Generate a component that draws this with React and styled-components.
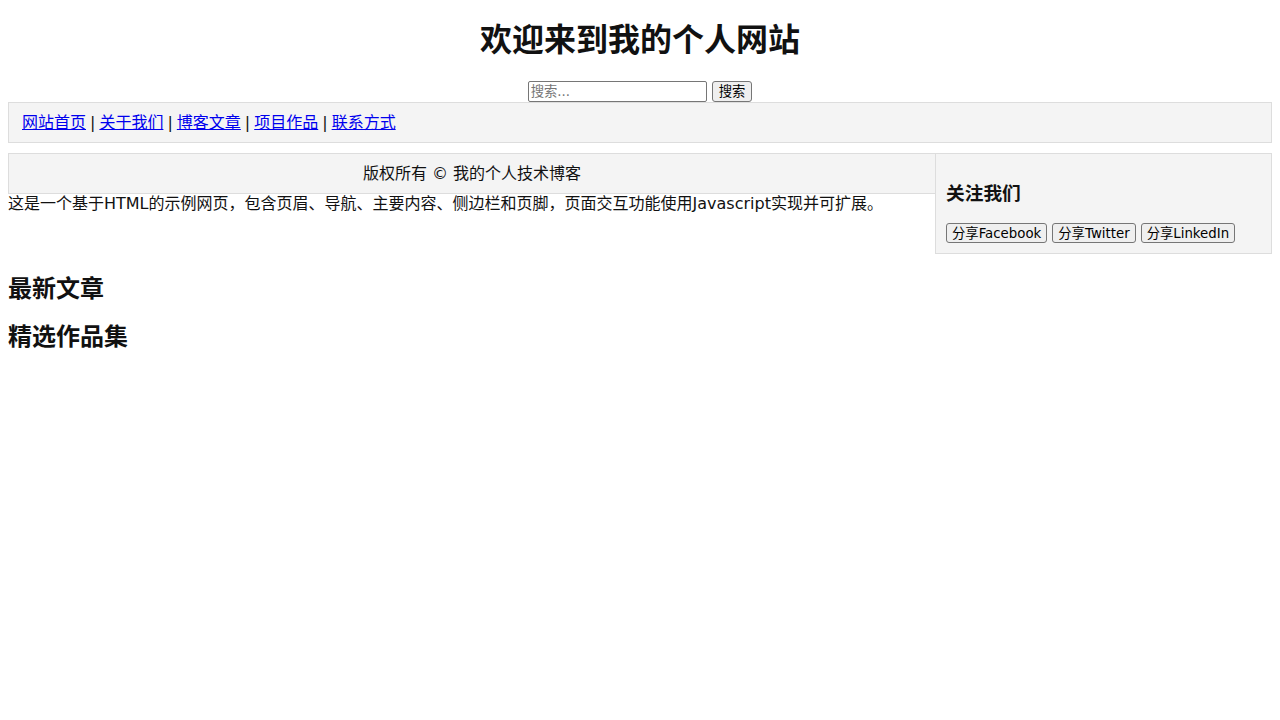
import React from "react";
import styled, { createGlobalStyle } from "styled-components";

const GlobalStyle = createGlobalStyle`
  html, body {
    margin: 0;
    padding: 0;
    background: #ffffff;
  }
  body {
    font-family: "DejaVu Sans", "Noto Sans CJK SC", sans-serif;
    font-size: 16px;
    color: #111111;
  }
`;

const Page = styled.div`
  padding: 0 8px 8px;
`;

const Header = styled.header`
  text-align: center;
`;

const Title = styled.h1`
  margin: 22px 0 22px;
  font-size: 32px;
  line-height: 37px;
  font-weight: 700;
`;

const SearchForm = styled.form`
  display: flex;
  justify-content: center;
  align-items: center;
  gap: 5px;
  height: 21px;
`;

const SearchInput = styled.input`
  box-sizing: border-box;
  width: 179px;
  height: 21px;
  padding: 1px 2px;
  border: 1px solid #767676;
  border-radius: 2px;
  font-family: "DejaVu Sans", "Noto Sans CJK SC", sans-serif;
  font-size: 13.33px;
  color: #111;
  &::placeholder {
    color: #757575;
  }
`;

const Button = styled.button`
  box-sizing: border-box;
  height: ${(p) => (p.$small ? "20px" : "21px")};
  padding: 0 ${(p) => (p.$small ? "5px" : "6px")};
  border: 1px solid #767676;
  border-radius: 3px;
  background: #efefef;
  font-family: "DejaVu Sans", "Noto Sans CJK SC", sans-serif;
  font-size: 13.33px;
  line-height: 17px;
  white-space: nowrap;
  color: #000;
  cursor: pointer;
`;

const Nav = styled.nav`
  background: #f4f4f4;
  border: 1px solid #dddddd;
  padding: 10px 13px;
  line-height: 19px;
  font-size: 16px;
`;

const NavLink = styled.a`
  color: #0000ee;
  text-decoration: underline;
`;

const Separator = styled.span`
  color: #111;
  margin: 0 4px;
`;

const Content = styled.div`
  display: grid;
  grid-template-columns: 1fr 337px;
  align-items: start;
  margin-top: 10px;
`;

const MainColumn = styled.main`
  display: block;
`;

const CopyrightBar = styled.footer`
  background: #f4f4f4;
  border: 1px solid #dddddd;
  border-right: none;
  padding: 10px;
  text-align: center;
  line-height: 19px;
  font-size: 16px;
`;

const Intro = styled.p`
  margin: 0;
  line-height: 19px;
  font-size: 16px;
`;

const Sections = styled.div`
  padding-top: 42px;
`;

const SectionTitle = styled.h2`
  margin: 20px 0;
  font-size: 24px;
  line-height: 28px;
  font-weight: 700;
`;

const Sidebar = styled.aside`
  background: #f4f4f4;
  border: 1px solid #dddddd;
  padding: 10px;
`;

const SidebarTitle = styled.h3`
  margin: 18.72px 0;
  font-size: 18.72px;
  line-height: 22px;
  font-weight: 700;
`;

const ShareRow = styled.div`
  display: flex;
  gap: 5px;
`;

const navItems = ["网站首页", "关于我们", "博客文章", "项目作品", "联系方式"];
const shareItems = ["Facebook", "Twitter", "LinkedIn"];

export default function App() {
  return (
    <>
      <GlobalStyle />
      <Page>
        <Header>
          <Title>欢迎来到我的个人网站</Title>
          <SearchForm onSubmit={(e) => e.preventDefault()}>
            <SearchInput type="text" placeholder="搜索..." />
            <Button type="submit">搜索</Button>
          </SearchForm>
        </Header>
        <Nav>
          {navItems.map((item, i) => (
            <React.Fragment key={item}>
              {i > 0 && <Separator>|</Separator>}
              <NavLink href="#">{item}</NavLink>
            </React.Fragment>
          ))}
        </Nav>
        <Content>
          <MainColumn>
            <CopyrightBar>版权所有 © 我的个人技术博客</CopyrightBar>
            <Intro>
              这是一个基于HTML的示例网页，包含页眉、导航、主要内容、侧边栏和页脚，页面交互功能使用Javascript实现并可扩展。
            </Intro>
            <Sections>
              <SectionTitle>最新文章</SectionTitle>
              <SectionTitle>精选作品集</SectionTitle>
            </Sections>
          </MainColumn>
          <Sidebar>
            <SidebarTitle>关注我们</SidebarTitle>
            <ShareRow>
              {shareItems.map((s) => (
                <Button $small type="button" key={s}>
                  分享{s}
                </Button>
              ))}
            </ShareRow>
          </Sidebar>
        </Content>
      </Page>
    </>
  );
}
